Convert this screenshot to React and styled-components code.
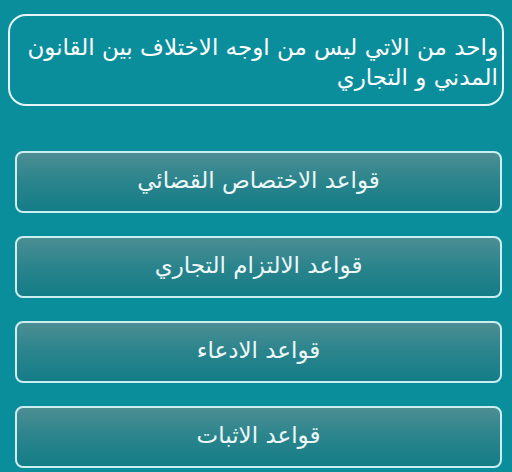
import styled, { createGlobalStyle } from 'styled-components';

const Global = createGlobalStyle`
  html, body {
    margin: 0;
    padding: 0;
    background: #0a8e9c;
  }
  body {
    font-family: "DejaVu Sans", "Noto Sans", sans-serif;
  }
`;

const Screen = styled.div`
  width: 512px;
  height: 472px;
  box-sizing: border-box;
  padding: 14px 8px 0 8px;
  display: flex;
  flex-direction: column;
  background: #0a8e9c;
  direction: rtl;
  overflow: hidden;
`;

const Question = styled.div`
  height: 92px;
  box-sizing: border-box;
  border: 2px solid #e6f4f5;
  border-radius: 18px;
  padding: 16px 4px 0 12px;
  color: #ffffff;
  font-size: 23px;
  line-height: 30px;
  text-align: right;
`;

const Answers = styled.div`
  margin-top: 45px;
  padding: 0 2px 0 7px;
  display: flex;
  flex-direction: column;
  gap: 23px;
`;

const Answer = styled.button`
  height: 62px;
  width: 100%;
  box-sizing: border-box;
  border: 2px solid #cdeef0;
  border-radius: 8px;
  background: linear-gradient(to bottom, #4c8e93 0%, #2a848c 50%, #147d87 100%);
  color: #eef7f8;
  font-family: inherit;
  font-size: 23px;
  direction: rtl;
  display: flex;
  align-items: center;
  justify-content: center;
  padding: 0 0 4px;
`;

const answers = [
  'قواعد الاختصاص القضائي',
  'قواعد الالتزام التجاري',
  'قواعد الادعاء',
  'قواعد الاثبات',
];

export default function App() {
  return (
    <>
      <Global />
      <Screen>
        <Question>
          واحد من الاتي ليس من اوجه الاختلاف بين القانون المدني و التجاري
        </Question>
        <Answers>
          {answers.map((a) => (
            <Answer key={a}>{a}</Answer>
          ))}
        </Answers>
      </Screen>
    </>
  );
}
